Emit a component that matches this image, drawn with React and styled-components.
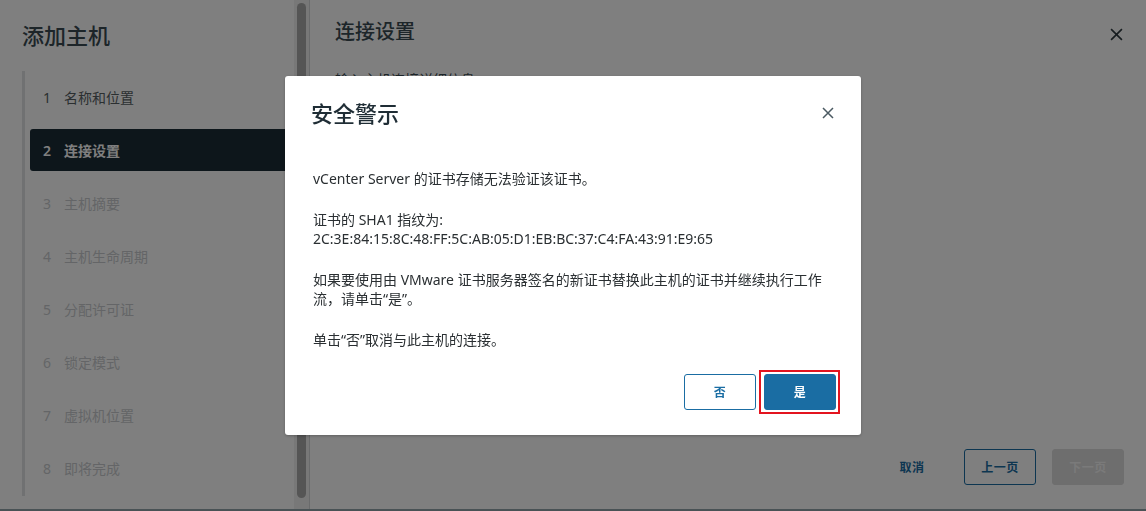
import React from 'react';
import styled, {createGlobalStyle} from 'styled-components';

const blue = "#1a6da3";
const textDark = "#3a4b53";

const GlobalStyle = createGlobalStyle`
  html, body {
    margin: 0;
    padding: 0;
    overflow: hidden;
    background: #ffffff;
    font-family: "Noto Sans", "Noto Sans CJK SC", sans-serif;
  }
`;

const Page = styled.div`
  width: 1146px;
  height: 511px;
  display: flex;
  flex-direction: column;
  background: #ffffff;
`;

const Wizard = styled.div`
  flex: 1;
  display: flex;
  min-height: 0;
`;

const BottomEdge = styled.div`
  height: 2px;
  background: #93a4aa;
`;

const Sidebar = styled.aside`
  width: 294px;
  display: flex;
  flex-direction: column;
  overflow: hidden;
`;

const WizardTitle = styled.h1`
  margin: 21px 0 0 22px;
  font-size: 22px;
  line-height: 28px;
  font-weight: 500;
  color: ${textDark};
`;

const StepList = styled.ul`
  list-style: none;
  margin: 22px 0 0 22px;
  padding: 5px 0 7px 5px;
  border-left: 3px solid #e0e3e5;
  display: flex;
  flex-direction: column;
  gap: 11px;
`;

const Step = styled.li`
  height: 42px;
  display: flex;
  align-items: center;
  gap: 13px;
  padding-left: 13px;
  border-radius: 3px 0 0 3px;
  font-size: 14px;
  font-weight: ${props => props.active ? 600 : 400};
  background: ${props => props.active ? "#1b2c36" : "transparent"};
  color: ${props => props.active ? "#ffffff" : props.done ? "#565e62" : "#c8cbce"};
`;

const ScrollTrack = styled.div`
  width: 15px;
  background: #f0f0f0;
  padding: 3px 3px 11px 3px;
  box-sizing: border-box;
  display: flex;
`;

const ScrollThumb = styled.div`
  flex: 1;
  background: #aaaaaa;
  border-radius: 5px;
`;

const Divider = styled.div`
  width: 1px;
  background: #d4d6d8;
`;

const Main = styled.section`
  flex: 1;
  display: flex;
  flex-direction: column;
  padding: 20px 22px 24px 25px;
`;

const MainHeader = styled.div`
  display: flex;
  justify-content: space-between;
  align-items: center;
`;

const MainTitle = styled.h2`
  margin: 0;
  font-size: 20px;
  line-height: 24px;
  font-weight: 500;
  color: ${textDark};
`;

const CloseButton = styled.button`
  border: none;
  background: transparent;
  padding: 0;
  width: 16px;
  height: 16px;
  display: flex;
  align-items: center;
  justify-content: center;
  color: ${props => props.color || "#4b5a62"};
  margin-top: ${props => props.offset || 0}px;
`;

const SubText = styled.p`
  margin: 26px 0 0 0;
  font-size: 14px;
  line-height: 20px;
  color: ${textDark};
`;

const Footer = styled.div`
  margin-top: auto;
  display: flex;
  justify-content: flex-end;
  gap: 16px;
`;

const Button = styled.button`
  position: relative;
  width: 72px;
  height: 36px;
  box-sizing: border-box;
  border-radius: 3px;
  font-family: "Noto Sans", "Noto Sans CJK SC", sans-serif;
  font-size: 12px;
  font-weight: 600;
  letter-spacing: 0.5px;
  cursor: pointer;
  border: 1px solid ${props => props.variant === "outline" || props.variant === "primary" ? blue : props.variant === "disabled" ? "#dcdcdc" : "transparent"};
  background: ${props => props.variant === "primary" ? blue : props.variant === "disabled" ? "#dcdcdc" : "#ffffff"};
  color: ${props => props.variant === "primary" ? "#ffffff" : props.variant === "disabled" ? "#f4f4f4" : blue};
  ${props => props.highlight && `
    &::after {
      content: "";
      position: absolute;
      left: -6px;
      right: -5px;
      top: -5px;
      bottom: -5px;
      border: 2px solid #e3141f;
    }
  `}
`;

const Overlay = styled.div`
  position: fixed;
  inset: 0;
  background: rgba(0, 0, 0, 0.5);
  display: flex;
  align-items: center;
  justify-content: center;
`;

const Modal = styled.div`
  width: 576px;
  height: 359px;
  box-sizing: border-box;
  background: #ffffff;
  border-radius: 3px;
  box-shadow: 0 1px 3px rgba(0, 0, 0, 0.25);
  padding: 24px 25px 25px 26px;
  display: flex;
  flex-direction: column;
`;

const ModalHeader = styled.div`
  display: flex;
  justify-content: space-between;
  align-items: center;
`;

const ModalTitle = styled.h3`
  margin: 0;
  font-size: 22px;
  line-height: 26px;
  font-weight: 500;
  color: #1f2d35;
`;

const ModalBody = styled.div`
  margin-top: 43px;
  padding-left: 2px;
  width: 510px;
  font-size: 14px;
  line-height: 19px;
  color: #2a2f32;
  p {
    margin: 0 0 22px 0;
  }
  p:last-child {
    margin-bottom: 0;
  }
`;

const ModalFooter = styled.div`
  margin-top: auto;
  display: flex;
  justify-content: flex-end;
  gap: 8px;
`;

const XIcon = ({size = 12, stroke = 1.5}) => (
  <svg width={size} height={size} viewBox="0 0 12 12">
    <path d="M1 1 L11 11 M11 1 L1 11" stroke="currentColor" strokeWidth={stroke} fill="none"/>
  </svg>
);

const steps = [
  '名称和位置',
  '连接设置',
  '主机摘要',
  '主机生命周期',
  '分配许可证',
  '锁定模式',
  '虚拟机位置',
  '即将完成'
];

const current = 1;

export default function App() {
  return (
    <>
      <GlobalStyle/>
      <Page>
        <Wizard>
          <Sidebar>
            <WizardTitle>添加主机</WizardTitle>
            <StepList>
              {steps.map((label, index) =>
                <Step key={index} active={index === current} done={index < current}>
                  <span>{index + 1}</span>
                  <span>{label}</span>
                </Step>
              )}
            </StepList>
          </Sidebar>
          <ScrollTrack><ScrollThumb/></ScrollTrack>
          <Divider/>
          <Main>
            <MainHeader>
              <MainTitle>连接设置</MainTitle>
              <CloseButton color="#2f3a40" offset={4}><XIcon size={13}/></CloseButton>
            </MainHeader>
            <SubText>输入主机连接详细信息</SubText>
            <Footer>
              <Button>取消</Button>
              <Button variant="outline">上一页</Button>
              <Button variant="disabled">下一页</Button>
            </Footer>
          </Main>
        </Wizard>
        <BottomEdge/>
      </Page>
      <Overlay>
        <Modal>
          <ModalHeader>
            <ModalTitle>安全警示</ModalTitle>
            <CloseButton><XIcon size={12}/></CloseButton>
          </ModalHeader>
          <ModalBody>
            <p>vCenter Server 的证书存储无法验证该证书。</p>
            <p>证书的 SHA1 指纹为:<br/>2C:3E:84:15:8C:48:FF:5C:AB:05:D1:EB:BC:37:C4:FA:43:91:E9:65</p>
            <p>如果要使用由 VMware 证书服务器签名的新证书替换此主机的证书并继续执行工作流，请单击“是”。</p>
            <p>单击“否”取消与此主机的连接。</p>
          </ModalBody>
          <ModalFooter>
            <Button variant="outline">否</Button>
            <Button variant="primary" highlight>是</Button>
          </ModalFooter>
        </Modal>
      </Overlay>
    </>
  );
}
